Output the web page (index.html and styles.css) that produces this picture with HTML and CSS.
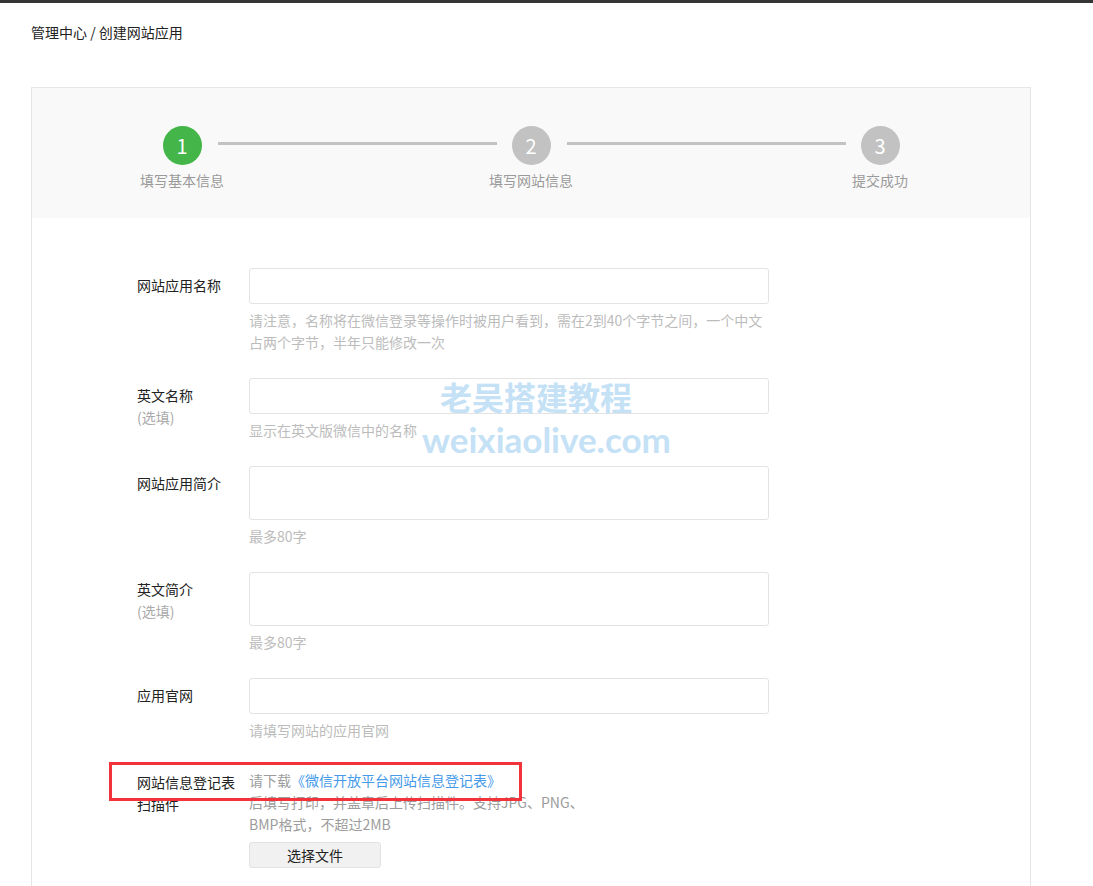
FILE: index.html
```html
<!DOCTYPE html>
<html>
<head>
  <title>创建网站应用</title>
  <meta charset="UTF-8">
  <meta name="viewport" content="width=device-width, initial-scale=1.0">
  <link rel="stylesheet" href="styles.css">
</head>
<body>
  <div class="topbar"></div>
  <div class="page">
    <div class="crumb">管理中心 / 创建网站应用</div>
    <div class="card">
      <div class="steps">
        <div class="step active">
          <span class="step-num">1</span>
          <span class="step-text">填写基本信息</span>
        </div>
        <div class="step-line"></div>
        <div class="step">
          <span class="step-num">2</span>
          <span class="step-text">填写网站信息</span>
        </div>
        <div class="step-line"></div>
        <div class="step">
          <span class="step-num">3</span>
          <span class="step-text">提交成功</span>
        </div>
      </div>

      <form class="form">
        <div class="form-row">
          <label class="form-label">网站应用名称</label>
          <div class="form-field">
            <input class="text-input" type="text">
            <p class="form-tip">请注意，名称将在微信登录等操作时被用户看到，需在2到40个字节之间，一个中文占两个字节，半年只能修改一次</p>
          </div>
        </div>
        <div class="form-row">
          <label class="form-label">英文名称<span class="optional">(选填)</span></label>
          <div class="form-field">
            <input class="text-input" type="text">
            <p class="form-tip">显示在英文版微信中的名称</p>
          </div>
        </div>
        <div class="form-row">
          <label class="form-label">网站应用简介</label>
          <div class="form-field">
            <textarea class="text-input area"></textarea>
            <p class="form-tip">最多80字</p>
          </div>
        </div>
        <div class="form-row">
          <label class="form-label">英文简介<span class="optional">(选填)</span></label>
          <div class="form-field">
            <textarea class="text-input area"></textarea>
            <p class="form-tip">最多80字</p>
          </div>
        </div>
        <div class="form-row">
          <label class="form-label">应用官网</label>
          <div class="form-field">
            <input class="text-input" type="text">
            <p class="form-tip">请填写网站的应用官网</p>
          </div>
        </div>
        <div class="form-row upload-row">
          <label class="form-label">网站信息登记表扫描件</label>
          <div class="form-field">
            <p class="upload-desc">请下载<a href="#">《微信开放平台网站信息登记表》</a><br>后填写打印，并盖章后上传扫描件。支持JPG、PNG、BMP格式，不超过2MB</p>
            <button type="button" class="file-btn">选择文件</button>
          </div>
        </div>
      </form>
    </div>
  </div>

  <div class="watermark">
    <div class="wm-cn">老吴搭建教程</div>
    <div class="wm-en">weixiaolive.com</div>
  </div>
  <div class="mark-box"></div>
</body>
</html>
```

FILE: styles.css
```css
body {
  margin: 0;
  font-family: "Noto Sans CJK SC", "Noto Sans", sans-serif;
  font-size: 14px;
  color: #222;
  background-color: #fff;
}
.topbar {
  height: 3px;
  background-color: #353535;
}
.page {
  padding: 0 31px;
}
.crumb {
  margin-top: 19px;
  line-height: 20px;
  color: #222;
}
.card {
  margin-top: 45px;
  width: 1000px;
  box-sizing: border-box;
  border: 1px solid #e6e6e6;
  border-bottom: none;
  padding-bottom: 60px;
}

/* steps */
.steps {
  display: flex;
  justify-content: center;
  background-color: #f9f9f9;
  padding: 38px 0 28px;
}
.step {
  width: 39px;
  display: flex;
  flex-direction: column;
  align-items: center;
}
.step-num {
  width: 39px;
  height: 39px;
  border-radius: 50%;
  background-color: #c2c2c2;
  color: #fff;
  font-size: 20px;
  line-height: 39px;
  text-align: center;
}
.step.active .step-num {
  background-color: #44b549;
}
.step-text {
  margin-top: 5px;
  white-space: nowrap;
  line-height: 20px;
  color: #9a9a9a;
}
.step-line {
  width: 279px;
  height: 3px;
  margin: 16px 15px 0 16px;
  background-color: #c2c2c2;
}

/* form */
.form {
  padding: 50px 0 0 105px;
}
.form-row {
  display: flex;
  margin-bottom: 25px;
}
.form-label {
  width: 100px;
  margin-right: 12px;
  padding-top: 6px;
  line-height: 22px;
  color: #222;
}
.optional {
  display: block;
  color: #aaa;
}
.form-field {
  width: 520px;
}
.text-input {
  display: block;
  width: 520px;
  height: 36px;
  box-sizing: border-box;
  margin: 0;
  padding: 6px 10px;
  border: 1px solid #e3e3e3;
  border-radius: 3px;
  font-family: inherit;
  font-size: 14px;
  outline: none;
  resize: none;
}
.text-input.area {
  height: 54px;
}
.form-tip {
  margin: 5px 0 0;
  line-height: 22px;
  color: #bcbcbc;
}
.upload-row {
  padding-top: 3px;
}
.upload-row .form-label {
  padding-top: 2px;
}
.upload-desc {
  width: 345px;
  margin: 0;
  line-height: 22px;
  color: #9c9c9c;
}
.upload-desc a {
  color: #459ae9;
  text-decoration: none;
}
.file-btn {
  display: block;
  margin-top: 7px;
  width: 132px;
  height: 26px;
  padding: 0;
  border: 1px solid #e2e2e2;
  border-radius: 3px;
  background-color: #f1f1f1;
  font-family: inherit;
  font-size: 14px;
  color: #222;
}

/* overlays */
.watermark {
  position: absolute;
  left: 440px;
  top: 377px;
  color: #c4e1f6;
  pointer-events: none;
}
.wm-cn {
  font-size: 32px;
  font-weight: bold;
  line-height: 38px;
}
.wm-en {
  margin-left: -18px;
  margin-top: 4px;
  font-family: Lato, sans-serif;
  font-size: 35px;
  font-weight: bold;
  line-height: 40px;
}
.mark-box {
  position: absolute;
  left: 109px;
  top: 762px;
  width: 413px;
  height: 39px;
  box-sizing: border-box;
  border: 3px solid #f2333b;
}
```
